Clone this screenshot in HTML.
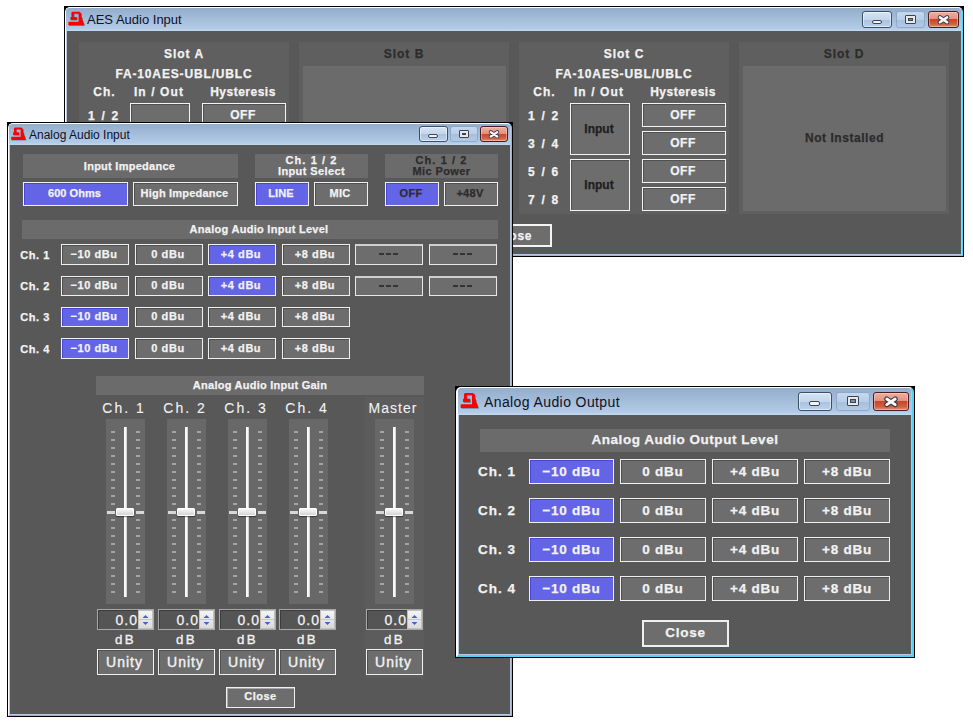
<!DOCTYPE html>
<html><head><meta charset="utf-8"><style>
html,body{margin:0;padding:0;width:973px;height:728px;overflow:hidden;background:#fff}
div{position:absolute;box-sizing:border-box}
.t{display:flex;align-items:center;justify-content:center;white-space:nowrap;text-align:center;-webkit-text-stroke:0.25px currentColor}
.tt{-webkit-text-stroke:0}
</style></head><body>
<div style="left:64px;top:6px;width:900px;height:251px;background:#000"></div>
<div style="left:65px;top:7px;width:898px;height:249px;background:#b8c6e0;border-left:1px solid #fff;border-top:1px solid #fff;border-right:1px solid #4cd2f2;border-bottom:1px solid #4cd2f2;border-radius:5px 5px 0 0"></div>
<div style="left:66px;top:8px;width:895px;height:23px;background:linear-gradient(#93adcb,#b3cbe6 90%,#c2daf4);border-radius:4px 4px 0 0"></div>
<div class="t" style="left:87px;top:9px;width:300px;height:20px;font:13px 'Liberation Sans';color:#101028;justify-content:flex-start;-webkit-text-stroke:0">AES Audio Input</div>
<svg style="position:absolute;left:66px;top:9px;overflow:visible" width="21.6" height="19.8" viewBox="0 0 24 22"><path d="M7,3 L15,3 L17,5 L17,8.8 L18,9.6 L18,12.2 L19,13.2 L19,14.6 L20,16 L20,18 L2.7,18 L2.7,14.2 L14,14.2 L14,5 L8.8,5 L8.8,8.8 L12.1,8.8 L12.1,12.1 L5,12.1 L5,8.8 L6,8.8 L6,4 Z" fill="rgba(40,60,70,0.45)" transform="translate(0.8,0.8)"/><path d="M7,3 L15,3 L17,5 L17,8.8 L18,9.6 L18,12.2 L19,13.2 L19,14.6 L20,16 L20,18 L2.7,18 L2.7,14.2 L14,14.2 L14,5 L8.8,5 L8.8,8.8 L12.1,8.8 L12.1,12.1 L5,12.1 L5,8.8 L6,8.8 L6,4 Z" fill="#ff0000"/></svg>
<div style="left:862px;top:11px;width:30px;height:17px;border:1px solid #3d4f66;border-radius:3px;background:linear-gradient(#d6e4f4 0%,#c3d6ee 50%,#a9c2e0 51%,#bcd2ec 100%);box-shadow:inset 0 0 0 1px rgba(255,255,255,.5)"></div>
<div style="left:872px;top:20px;width:10px;height:4px;background:#f4f4f4;border:1px solid #3c4450;border-radius:2px"></div>
<div style="left:896px;top:11px;width:29px;height:17px;border:1px solid #8fa9c8;border-radius:3px;background:linear-gradient(#c6d8ee 0%,#b8cde8 50%,#a6bfdd 51%,#b4cae6 100%)"></div>
<div style="left:905px;top:15px;width:11px;height:9px;border:1px solid #3c4450;background:#e8e8e8;border-radius:1px"></div>
<div style="left:908px;top:18px;width:5px;height:3px;border:1px solid #3c4450;background:#6d8fc0"></div>
<div style="left:928px;top:11px;width:31px;height:17px;border:1px solid #4a1c24;border-radius:3px;background:linear-gradient(#eeb0a0 0%,#e2907c 48%,#c8452a 50%,#d0603e 80%,#e09078 100%);box-shadow:inset 0 0 0 1px rgba(255,220,210,.45)"></div>
<svg style="position:absolute;left:928px;top:11px" width="31" height="17" viewBox="0 0 31 17"><g transform="translate(15.5,8.8) scale(1.0)"><path d="M-3.6,-2.4 L3.6,2.4 M3.6,-2.4 L-3.6,2.4" stroke="#3a3a48" stroke-width="4.4" stroke-linecap="round"/><path d="M-3.6,-2.4 L3.6,2.4 M3.6,-2.4 L-3.6,2.4" stroke="#fafafa" stroke-width="2.5" stroke-linecap="round"/></g></svg>
<div style="left:67px;top:31px;width:894px;height:223px;background:#585858"></div>
<div style="left:79px;top:42px;width:210px;height:172px;background:#5f5f5f"></div>
<div class="t" style="left:79px;top:47px;width:210px;height:14px;font:bold 12px 'Liberation Sans';letter-spacing:0.6px;color:#f2f2f2;letter-spacing:1px">Slot A</div>
<div class="t" style="left:79px;top:67px;width:210px;height:14px;font:bold 12px 'Liberation Sans';letter-spacing:0.6px;color:#f2f2f2;letter-spacing:0.85px">FA-10AES-UBL/UBLC</div>
<div class="t" style="left:87px;top:85px;width:35px;height:14px;font:bold 12px 'Liberation Sans';letter-spacing:0.6px;color:#f2f2f2;letter-spacing:1px">Ch.</div>
<div class="t" style="left:129px;top:85px;width:60px;height:14px;font:bold 12px 'Liberation Sans';letter-spacing:0.6px;color:#f2f2f2;letter-spacing:1.1px">In / Out</div>
<div class="t" style="left:201px;top:85px;width:84px;height:14px;font:bold 12px 'Liberation Sans';letter-spacing:0.6px;color:#f2f2f2;letter-spacing:0.5px">Hysteresis</div>
<div class="t" style="left:78px;top:109px;width:52px;height:14px;font:bold 12px 'Liberation Sans';letter-spacing:0.6px;color:#f2f2f2;letter-spacing:1.7px">1 / 2</div>
<div style="left:202px;top:103px;width:84px;height:24px;background:#6d6d6d;border:1px solid #f4f4f4;box-shadow:inset 1px 1px 0 #505050"></div>
<div class="t" style="left:201px;top:103px;width:84px;height:24px;font:bold 12px 'Liberation Sans';letter-spacing:0.6px;color:#f2f2f2;letter-spacing:0.5px">OFF</div>
<div class="t" style="left:78px;top:137px;width:52px;height:14px;font:bold 12px 'Liberation Sans';letter-spacing:0.6px;color:#f2f2f2;letter-spacing:1.7px">3 / 4</div>
<div style="left:202px;top:131px;width:84px;height:24px;background:#6d6d6d;border:1px solid #f4f4f4;box-shadow:inset 1px 1px 0 #505050"></div>
<div class="t" style="left:201px;top:131px;width:84px;height:24px;font:bold 12px 'Liberation Sans';letter-spacing:0.6px;color:#f2f2f2;letter-spacing:0.5px">OFF</div>
<div class="t" style="left:78px;top:165px;width:52px;height:14px;font:bold 12px 'Liberation Sans';letter-spacing:0.6px;color:#f2f2f2;letter-spacing:1.7px">5 / 6</div>
<div style="left:202px;top:159px;width:84px;height:24px;background:#6d6d6d;border:1px solid #f4f4f4;box-shadow:inset 1px 1px 0 #505050"></div>
<div class="t" style="left:201px;top:159px;width:84px;height:24px;font:bold 12px 'Liberation Sans';letter-spacing:0.6px;color:#f2f2f2;letter-spacing:0.5px">OFF</div>
<div class="t" style="left:78px;top:193px;width:52px;height:14px;font:bold 12px 'Liberation Sans';letter-spacing:0.6px;color:#f2f2f2;letter-spacing:1.7px">7 / 8</div>
<div style="left:202px;top:187px;width:84px;height:24px;background:#6d6d6d;border:1px solid #f4f4f4;box-shadow:inset 1px 1px 0 #505050"></div>
<div class="t" style="left:201px;top:187px;width:84px;height:24px;font:bold 12px 'Liberation Sans';letter-spacing:0.6px;color:#f2f2f2;letter-spacing:0.5px">OFF</div>
<div style="left:130px;top:103px;width:60px;height:52px;background:#6d6d6d;border:1px solid #f4f4f4;box-shadow:inset 1px 1px 0 #505050"></div>
<div class="t" style="left:129px;top:103px;width:60px;height:51px;font:bold 12px 'Liberation Sans';letter-spacing:0.6px;color:#1e1e1e;letter-spacing:0px">Input</div>
<div style="left:130px;top:159px;width:60px;height:52px;background:#6d6d6d;border:1px solid #f4f4f4;box-shadow:inset 1px 1px 0 #505050"></div>
<div class="t" style="left:129px;top:159px;width:60px;height:51px;font:bold 12px 'Liberation Sans';letter-spacing:0.6px;color:#1e1e1e;letter-spacing:0px">Input</div>
<div style="left:299px;top:42px;width:210px;height:172px;background:#5f5f5f"></div>
<div class="t" style="left:299px;top:47px;width:210px;height:14px;font:bold 12px 'Liberation Sans';letter-spacing:0.6px;color:#2c2c2c;letter-spacing:1px">Slot B</div>
<div style="left:303px;top:66px;width:203px;height:145px;background:#6b6b6b"></div>
<div style="left:519px;top:42px;width:210px;height:172px;background:#5f5f5f"></div>
<div class="t" style="left:519px;top:47px;width:210px;height:14px;font:bold 12px 'Liberation Sans';letter-spacing:0.6px;color:#f2f2f2;letter-spacing:1px">Slot C</div>
<div class="t" style="left:519px;top:67px;width:210px;height:14px;font:bold 12px 'Liberation Sans';letter-spacing:0.6px;color:#f2f2f2;letter-spacing:0.85px">FA-10AES-UBL/UBLC</div>
<div class="t" style="left:527px;top:85px;width:35px;height:14px;font:bold 12px 'Liberation Sans';letter-spacing:0.6px;color:#f2f2f2;letter-spacing:1px">Ch.</div>
<div class="t" style="left:569px;top:85px;width:60px;height:14px;font:bold 12px 'Liberation Sans';letter-spacing:0.6px;color:#f2f2f2;letter-spacing:1.1px">In / Out</div>
<div class="t" style="left:641px;top:85px;width:84px;height:14px;font:bold 12px 'Liberation Sans';letter-spacing:0.6px;color:#f2f2f2;letter-spacing:0.5px">Hysteresis</div>
<div class="t" style="left:518px;top:109px;width:52px;height:14px;font:bold 12px 'Liberation Sans';letter-spacing:0.6px;color:#f2f2f2;letter-spacing:1.7px">1 / 2</div>
<div style="left:642px;top:103px;width:84px;height:24px;background:#6d6d6d;border:1px solid #f4f4f4;box-shadow:inset 1px 1px 0 #505050"></div>
<div class="t" style="left:641px;top:103px;width:84px;height:24px;font:bold 12px 'Liberation Sans';letter-spacing:0.6px;color:#f2f2f2;letter-spacing:0.5px">OFF</div>
<div class="t" style="left:518px;top:137px;width:52px;height:14px;font:bold 12px 'Liberation Sans';letter-spacing:0.6px;color:#f2f2f2;letter-spacing:1.7px">3 / 4</div>
<div style="left:642px;top:131px;width:84px;height:24px;background:#6d6d6d;border:1px solid #f4f4f4;box-shadow:inset 1px 1px 0 #505050"></div>
<div class="t" style="left:641px;top:131px;width:84px;height:24px;font:bold 12px 'Liberation Sans';letter-spacing:0.6px;color:#f2f2f2;letter-spacing:0.5px">OFF</div>
<div class="t" style="left:518px;top:165px;width:52px;height:14px;font:bold 12px 'Liberation Sans';letter-spacing:0.6px;color:#f2f2f2;letter-spacing:1.7px">5 / 6</div>
<div style="left:642px;top:159px;width:84px;height:24px;background:#6d6d6d;border:1px solid #f4f4f4;box-shadow:inset 1px 1px 0 #505050"></div>
<div class="t" style="left:641px;top:159px;width:84px;height:24px;font:bold 12px 'Liberation Sans';letter-spacing:0.6px;color:#f2f2f2;letter-spacing:0.5px">OFF</div>
<div class="t" style="left:518px;top:193px;width:52px;height:14px;font:bold 12px 'Liberation Sans';letter-spacing:0.6px;color:#f2f2f2;letter-spacing:1.7px">7 / 8</div>
<div style="left:642px;top:187px;width:84px;height:24px;background:#6d6d6d;border:1px solid #f4f4f4;box-shadow:inset 1px 1px 0 #505050"></div>
<div class="t" style="left:641px;top:187px;width:84px;height:24px;font:bold 12px 'Liberation Sans';letter-spacing:0.6px;color:#f2f2f2;letter-spacing:0.5px">OFF</div>
<div style="left:570px;top:103px;width:60px;height:52px;background:#6d6d6d;border:1px solid #f4f4f4;box-shadow:inset 1px 1px 0 #505050"></div>
<div class="t" style="left:569px;top:103px;width:60px;height:51px;font:bold 12px 'Liberation Sans';letter-spacing:0.6px;color:#1e1e1e;letter-spacing:0px">Input</div>
<div style="left:570px;top:159px;width:60px;height:52px;background:#6d6d6d;border:1px solid #f4f4f4;box-shadow:inset 1px 1px 0 #505050"></div>
<div class="t" style="left:569px;top:159px;width:60px;height:51px;font:bold 12px 'Liberation Sans';letter-spacing:0.6px;color:#1e1e1e;letter-spacing:0px">Input</div>
<div style="left:739px;top:42px;width:210px;height:172px;background:#5f5f5f"></div>
<div class="t" style="left:739px;top:47px;width:210px;height:14px;font:bold 12px 'Liberation Sans';letter-spacing:0.6px;color:#2c2c2c;letter-spacing:1px">Slot D</div>
<div style="left:743px;top:66px;width:203px;height:145px;background:#6b6b6b"></div>
<div class="t" style="left:743px;top:65px;width:203px;height:145px;font:bold 12px 'Liberation Sans';letter-spacing:0.6px;color:#2c2c2c;letter-spacing:0.55px">Not Installed</div>
<div style="left:476px;top:224px;width:76px;height:23px;background:#6d6d6d;border:2px solid #f4f4f4"></div>
<div class="t" style="left:476px;top:224px;width:76px;height:23px;font:bold 12px 'Liberation Sans';letter-spacing:0.6px;color:#f2f2f2;letter-spacing:0.8px">Close</div>
<div style="left:7px;top:122px;width:506px;height:595px;background:#000"></div>
<div style="left:8px;top:123px;width:504px;height:593px;background:#b8c6e0;border-left:1px solid #fff;border-top:1px solid #fff;border-right:1px solid #4cd2f2;border-bottom:1px solid #4cd2f2;border-radius:5px 5px 0 0"></div>
<div style="left:9px;top:124px;width:501px;height:21px;background:linear-gradient(#93adcb,#b3cbe6 90%,#c2daf4);border-radius:4px 4px 0 0"></div>
<div class="t" style="left:29px;top:125px;width:300px;height:20px;font:12px 'Liberation Sans';color:#101028;justify-content:flex-start;-webkit-text-stroke:0">Analog Audio Input</div>
<svg style="position:absolute;left:9.3px;top:124.9px;overflow:visible" width="19.919999999999998" height="18.259999999999998" viewBox="0 0 24 22"><path d="M7,3 L15,3 L17,5 L17,8.8 L18,9.6 L18,12.2 L19,13.2 L19,14.6 L20,16 L20,18 L2.7,18 L2.7,14.2 L14,14.2 L14,5 L8.8,5 L8.8,8.8 L12.1,8.8 L12.1,12.1 L5,12.1 L5,8.8 L6,8.8 L6,4 Z" fill="rgba(40,60,70,0.45)" transform="translate(0.8,0.8)"/><path d="M7,3 L15,3 L17,5 L17,8.8 L18,9.6 L18,12.2 L19,13.2 L19,14.6 L20,16 L20,18 L2.7,18 L2.7,14.2 L14,14.2 L14,5 L8.8,5 L8.8,8.8 L12.1,8.8 L12.1,12.1 L5,12.1 L5,8.8 L6,8.8 L6,4 Z" fill="#ff0000"/></svg>
<div style="left:419px;top:126px;width:29px;height:16px;border:1px solid #3d4f66;border-radius:3px;background:linear-gradient(#d6e4f4 0%,#c3d6ee 50%,#a9c2e0 51%,#bcd2ec 100%);box-shadow:inset 0 0 0 1px rgba(255,255,255,.5)"></div>
<div style="left:428px;top:134px;width:10px;height:4px;background:#f4f4f4;border:1px solid #3c4450;border-radius:2px"></div>
<div style="left:450px;top:126px;width:28px;height:16px;border:1px solid #8fa9c8;border-radius:3px;background:linear-gradient(#c6d8ee 0%,#b8cde8 50%,#a6bfdd 51%,#b4cae6 100%)"></div>
<div style="left:459px;top:130px;width:10px;height:8px;border:1px solid #3c4450;background:#e8e8e8;border-radius:1px"></div>
<div style="left:462px;top:133px;width:4px;height:2px;border:1px solid #3c4450;background:#6d8fc0"></div>
<div style="left:480px;top:126px;width:28px;height:16px;border:1px solid #4a1c24;border-radius:3px;background:linear-gradient(#eeb0a0 0%,#e2907c 48%,#c8452a 50%,#d0603e 80%,#e09078 100%);box-shadow:inset 0 0 0 1px rgba(255,220,210,.45)"></div>
<svg style="position:absolute;left:480px;top:126px" width="28" height="16" viewBox="0 0 28 16"><g transform="translate(14.0,8.3) scale(0.9032258064516129)"><path d="M-3.6,-2.4 L3.6,2.4 M3.6,-2.4 L-3.6,2.4" stroke="#3a3a48" stroke-width="4.4" stroke-linecap="round"/><path d="M-3.6,-2.4 L3.6,2.4 M3.6,-2.4 L-3.6,2.4" stroke="#fafafa" stroke-width="2.5" stroke-linecap="round"/></g></svg>
<div style="left:10px;top:145px;width:500px;height:569px;background:#585858"></div>
<div style="left:23px;top:154px;width:215px;height:24px;background:#6b6b6b"></div>
<div class="t" style="left:22px;top:154px;width:215px;height:24px;font:bold 11px 'Liberation Sans';color:#f2f2f2;letter-spacing:0.26px">Input Impedance</div>
<div style="left:23px;top:182px;width:105px;height:24px;background:#6464e6;border:1px solid #f0f0f0;box-shadow:inset 1px 1px 0 #4646d8"></div>
<div class="t" style="left:22px;top:181px;width:105px;height:24px;font:bold 11px 'Liberation Sans';color:#f2f2f2;letter-spacing:0.05px">600 Ohms</div>
<div style="left:133px;top:182px;width:105px;height:24px;background:#6d6d6d;border:1px solid #f0f0f0;box-shadow:inset 1px 1px 0 #505050"></div>
<div class="t" style="left:132px;top:181px;width:105px;height:24px;font:bold 11px 'Liberation Sans';color:#f2f2f2;letter-spacing:0.2px">High Impedance</div>
<div style="left:255px;top:154px;width:113px;height:24px;background:#6b6b6b"></div>
<div class="t" style="left:255px;top:154px;width:113px;height:24px;font:bold 11px 'Liberation Sans';color:#f2f2f2;line-height:11px;flex-direction:column;letter-spacing:0.4px"><span style="letter-spacing:1.1px">Ch. 1 / 2</span><span>Input Select</span></div>
<div style="left:255px;top:182px;width:54px;height:24px;background:#6464e6;border:1px solid #f0f0f0;box-shadow:inset 1px 1px 0 #4646d8"></div>
<div class="t" style="left:254px;top:181px;width:54px;height:24px;font:bold 11px 'Liberation Sans';color:#f2f2f2;letter-spacing:0.1px">LINE</div>
<div style="left:314px;top:182px;width:54px;height:24px;background:#6d6d6d;border:1px solid #f0f0f0;box-shadow:inset 1px 1px 0 #505050"></div>
<div class="t" style="left:313px;top:181px;width:54px;height:24px;font:bold 11px 'Liberation Sans';color:#f2f2f2;letter-spacing:0.3px">MIC</div>
<div style="left:385px;top:154px;width:113px;height:24px;background:#6b6b6b"></div>
<div class="t" style="left:385px;top:154px;width:113px;height:24px;font:bold 11px 'Liberation Sans';color:#2c2c2c;line-height:11px;flex-direction:column;letter-spacing:0.4px"><span style="letter-spacing:1.1px">Ch. 1 / 2</span><span>Mic Power</span></div>
<div style="left:385px;top:182px;width:54px;height:24px;background:#6464e6;border:1px solid #f0f0f0;box-shadow:inset 1px 1px 0 #4646d8"></div>
<div class="t" style="left:384px;top:181px;width:54px;height:24px;font:bold 11px 'Liberation Sans';color:#2c2c2c;letter-spacing:0.3px">OFF</div>
<div style="left:444px;top:182px;width:54px;height:24px;background:#6d6d6d;border:1px solid #f0f0f0;box-shadow:inset 1px 1px 0 #505050"></div>
<div class="t" style="left:443px;top:181px;width:54px;height:24px;font:bold 11px 'Liberation Sans';color:#2c2c2c;letter-spacing:0.3px">+48V</div>
<div style="left:22px;top:220px;width:476px;height:19px;background:#6b6b6b"></div>
<div class="t" style="left:21px;top:219.5px;width:476px;height:19px;font:bold 11px 'Liberation Sans';color:#f2f2f2;letter-spacing:0.28px">Analog Audio Input Level</div>
<div class="t" style="left:15px;top:244px;width:40px;height:21px;font:bold 11px 'Liberation Sans';color:#f2f2f2;letter-spacing:0.55px">Ch. 1</div>
<div style="left:61px;top:244px;width:68px;height:21px;background:#6d6d6d;border:1px solid #f0f0f0;box-shadow:inset 1px 1px 0 #505050"></div>
<div class="t" style="left:60px;top:243px;width:68px;height:21px;font:bold 11px 'Liberation Sans';color:#f2f2f2;letter-spacing:0.55px">−10 dBu</div>
<div style="left:135px;top:244px;width:68px;height:21px;background:#6d6d6d;border:1px solid #f0f0f0;box-shadow:inset 1px 1px 0 #505050"></div>
<div class="t" style="left:134px;top:243px;width:68px;height:21px;font:bold 11px 'Liberation Sans';color:#f2f2f2;letter-spacing:0.55px">0 dBu</div>
<div style="left:208px;top:244px;width:68px;height:21px;background:#6464e6;border:1px solid #f0f0f0;box-shadow:inset 1px 1px 0 #4646d8"></div>
<div class="t" style="left:207px;top:243px;width:68px;height:21px;font:bold 11px 'Liberation Sans';color:#f2f2f2;letter-spacing:0.55px">+4 dBu</div>
<div style="left:282px;top:244px;width:68px;height:21px;background:#6d6d6d;border:1px solid #f0f0f0;box-shadow:inset 1px 1px 0 #505050"></div>
<div class="t" style="left:281px;top:243px;width:68px;height:21px;font:bold 11px 'Liberation Sans';color:#f2f2f2;letter-spacing:0.55px">+8 dBu</div>
<div style="left:355px;top:244px;width:68px;height:21px;background:#6d6d6d;border:1px solid #e8e8e8;border-top:2px solid #cfcfcf"></div>
<div style="left:379px;top:253px;width:5px;height:2px;background:#333"></div>
<div style="left:386px;top:253px;width:5px;height:2px;background:#333"></div>
<div style="left:393px;top:253px;width:5px;height:2px;background:#333"></div>
<div style="left:429px;top:244px;width:68px;height:21px;background:#6d6d6d;border:1px solid #e8e8e8;border-top:2px solid #cfcfcf"></div>
<div style="left:453px;top:253px;width:5px;height:2px;background:#333"></div>
<div style="left:460px;top:253px;width:5px;height:2px;background:#333"></div>
<div style="left:467px;top:253px;width:5px;height:2px;background:#333"></div>
<div class="t" style="left:15px;top:276px;width:40px;height:20px;font:bold 11px 'Liberation Sans';color:#f2f2f2;letter-spacing:0.55px">Ch. 2</div>
<div style="left:61px;top:276px;width:68px;height:20px;background:#6d6d6d;border:1px solid #f0f0f0;box-shadow:inset 1px 1px 0 #505050"></div>
<div class="t" style="left:60px;top:275px;width:68px;height:20px;font:bold 11px 'Liberation Sans';color:#f2f2f2;letter-spacing:0.55px">−10 dBu</div>
<div style="left:135px;top:276px;width:68px;height:20px;background:#6d6d6d;border:1px solid #f0f0f0;box-shadow:inset 1px 1px 0 #505050"></div>
<div class="t" style="left:134px;top:275px;width:68px;height:20px;font:bold 11px 'Liberation Sans';color:#f2f2f2;letter-spacing:0.55px">0 dBu</div>
<div style="left:208px;top:276px;width:68px;height:20px;background:#6464e6;border:1px solid #f0f0f0;box-shadow:inset 1px 1px 0 #4646d8"></div>
<div class="t" style="left:207px;top:275px;width:68px;height:20px;font:bold 11px 'Liberation Sans';color:#f2f2f2;letter-spacing:0.55px">+4 dBu</div>
<div style="left:282px;top:276px;width:68px;height:20px;background:#6d6d6d;border:1px solid #f0f0f0;box-shadow:inset 1px 1px 0 #505050"></div>
<div class="t" style="left:281px;top:275px;width:68px;height:20px;font:bold 11px 'Liberation Sans';color:#f2f2f2;letter-spacing:0.55px">+8 dBu</div>
<div style="left:355px;top:276px;width:68px;height:20px;background:#6d6d6d;border:1px solid #e8e8e8;border-top:2px solid #cfcfcf"></div>
<div style="left:379px;top:285px;width:5px;height:2px;background:#333"></div>
<div style="left:386px;top:285px;width:5px;height:2px;background:#333"></div>
<div style="left:393px;top:285px;width:5px;height:2px;background:#333"></div>
<div style="left:429px;top:276px;width:68px;height:20px;background:#6d6d6d;border:1px solid #e8e8e8;border-top:2px solid #cfcfcf"></div>
<div style="left:453px;top:285px;width:5px;height:2px;background:#333"></div>
<div style="left:460px;top:285px;width:5px;height:2px;background:#333"></div>
<div style="left:467px;top:285px;width:5px;height:2px;background:#333"></div>
<div class="t" style="left:15px;top:307px;width:40px;height:20px;font:bold 11px 'Liberation Sans';color:#f2f2f2;letter-spacing:0.55px">Ch. 3</div>
<div style="left:61px;top:307px;width:68px;height:20px;background:#6464e6;border:1px solid #f0f0f0;box-shadow:inset 1px 1px 0 #4646d8"></div>
<div class="t" style="left:60px;top:306px;width:68px;height:20px;font:bold 11px 'Liberation Sans';color:#f2f2f2;letter-spacing:0.55px">−10 dBu</div>
<div style="left:135px;top:307px;width:68px;height:20px;background:#6d6d6d;border:1px solid #f0f0f0;box-shadow:inset 1px 1px 0 #505050"></div>
<div class="t" style="left:134px;top:306px;width:68px;height:20px;font:bold 11px 'Liberation Sans';color:#f2f2f2;letter-spacing:0.55px">0 dBu</div>
<div style="left:208px;top:307px;width:68px;height:20px;background:#6d6d6d;border:1px solid #f0f0f0;box-shadow:inset 1px 1px 0 #505050"></div>
<div class="t" style="left:207px;top:306px;width:68px;height:20px;font:bold 11px 'Liberation Sans';color:#f2f2f2;letter-spacing:0.55px">+4 dBu</div>
<div style="left:282px;top:307px;width:68px;height:20px;background:#6d6d6d;border:1px solid #f0f0f0;box-shadow:inset 1px 1px 0 #505050"></div>
<div class="t" style="left:281px;top:306px;width:68px;height:20px;font:bold 11px 'Liberation Sans';color:#f2f2f2;letter-spacing:0.55px">+8 dBu</div>
<div class="t" style="left:15px;top:338px;width:40px;height:21px;font:bold 11px 'Liberation Sans';color:#f2f2f2;letter-spacing:0.55px">Ch. 4</div>
<div style="left:61px;top:338px;width:68px;height:21px;background:#6464e6;border:1px solid #f0f0f0;box-shadow:inset 1px 1px 0 #4646d8"></div>
<div class="t" style="left:60px;top:337px;width:68px;height:21px;font:bold 11px 'Liberation Sans';color:#f2f2f2;letter-spacing:0.55px">−10 dBu</div>
<div style="left:135px;top:338px;width:68px;height:21px;background:#6d6d6d;border:1px solid #f0f0f0;box-shadow:inset 1px 1px 0 #505050"></div>
<div class="t" style="left:134px;top:337px;width:68px;height:21px;font:bold 11px 'Liberation Sans';color:#f2f2f2;letter-spacing:0.55px">0 dBu</div>
<div style="left:208px;top:338px;width:68px;height:21px;background:#6d6d6d;border:1px solid #f0f0f0;box-shadow:inset 1px 1px 0 #505050"></div>
<div class="t" style="left:207px;top:337px;width:68px;height:21px;font:bold 11px 'Liberation Sans';color:#f2f2f2;letter-spacing:0.55px">+4 dBu</div>
<div style="left:282px;top:338px;width:68px;height:21px;background:#6d6d6d;border:1px solid #f0f0f0;box-shadow:inset 1px 1px 0 #505050"></div>
<div class="t" style="left:281px;top:337px;width:68px;height:21px;font:bold 11px 'Liberation Sans';color:#f2f2f2;letter-spacing:0.55px">+8 dBu</div>
<div style="left:96px;top:376px;width:328px;height:19px;background:#6b6b6b"></div>
<div class="t" style="left:96px;top:375px;width:328px;height:19px;font:bold 11px 'Liberation Sans';color:#f2f2f2;letter-spacing:0.25px">Analog Audio Input Gain</div>
<div style="left:365px;top:397px;width:59px;height:281px;background:#5c5c5c"></div>
<div class="t" style="left:94.5px;top:401px;width:59px;height:14px;font:14px 'Liberation Sans';color:#f2f2f2;letter-spacing:2px;-webkit-text-stroke:0.1px">Ch. 1</div>
<div style="left:106px;top:419px;width:39px;height:185px;background:#686868"></div>
<div style="left:111px;top:431px;width:4px;height:2px;background:#a4a4a4"></div>
<div style="left:136px;top:431px;width:4px;height:2px;background:#a4a4a4"></div>
<div style="left:111px;top:439px;width:4px;height:2px;background:#a4a4a4"></div>
<div style="left:136px;top:439px;width:4px;height:2px;background:#a4a4a4"></div>
<div style="left:111px;top:447px;width:4px;height:2px;background:#a4a4a4"></div>
<div style="left:136px;top:447px;width:4px;height:2px;background:#a4a4a4"></div>
<div style="left:111px;top:455px;width:4px;height:2px;background:#a4a4a4"></div>
<div style="left:136px;top:455px;width:4px;height:2px;background:#a4a4a4"></div>
<div style="left:111px;top:463px;width:4px;height:2px;background:#a4a4a4"></div>
<div style="left:136px;top:463px;width:4px;height:2px;background:#a4a4a4"></div>
<div style="left:111px;top:471px;width:4px;height:2px;background:#a4a4a4"></div>
<div style="left:136px;top:471px;width:4px;height:2px;background:#a4a4a4"></div>
<div style="left:111px;top:479px;width:4px;height:2px;background:#a4a4a4"></div>
<div style="left:136px;top:479px;width:4px;height:2px;background:#a4a4a4"></div>
<div style="left:111px;top:487px;width:4px;height:2px;background:#a4a4a4"></div>
<div style="left:136px;top:487px;width:4px;height:2px;background:#a4a4a4"></div>
<div style="left:111px;top:495px;width:4px;height:2px;background:#a4a4a4"></div>
<div style="left:136px;top:495px;width:4px;height:2px;background:#a4a4a4"></div>
<div style="left:111px;top:503px;width:4px;height:2px;background:#a4a4a4"></div>
<div style="left:136px;top:503px;width:4px;height:2px;background:#a4a4a4"></div>
<div style="left:107px;top:511px;width:8px;height:3px;background:#d8d8d8"></div>
<div style="left:136px;top:511px;width:8px;height:3px;background:#d8d8d8"></div>
<div style="left:111px;top:519px;width:4px;height:2px;background:#a4a4a4"></div>
<div style="left:136px;top:519px;width:4px;height:2px;background:#a4a4a4"></div>
<div style="left:111px;top:527px;width:4px;height:2px;background:#a4a4a4"></div>
<div style="left:136px;top:527px;width:4px;height:2px;background:#a4a4a4"></div>
<div style="left:111px;top:535px;width:4px;height:2px;background:#a4a4a4"></div>
<div style="left:136px;top:535px;width:4px;height:2px;background:#a4a4a4"></div>
<div style="left:111px;top:543px;width:4px;height:2px;background:#a4a4a4"></div>
<div style="left:136px;top:543px;width:4px;height:2px;background:#a4a4a4"></div>
<div style="left:111px;top:551px;width:4px;height:2px;background:#a4a4a4"></div>
<div style="left:136px;top:551px;width:4px;height:2px;background:#a4a4a4"></div>
<div style="left:111px;top:559px;width:4px;height:2px;background:#a4a4a4"></div>
<div style="left:136px;top:559px;width:4px;height:2px;background:#a4a4a4"></div>
<div style="left:111px;top:567px;width:4px;height:2px;background:#a4a4a4"></div>
<div style="left:136px;top:567px;width:4px;height:2px;background:#a4a4a4"></div>
<div style="left:111px;top:575px;width:4px;height:2px;background:#a4a4a4"></div>
<div style="left:136px;top:575px;width:4px;height:2px;background:#a4a4a4"></div>
<div style="left:111px;top:583px;width:4px;height:2px;background:#a4a4a4"></div>
<div style="left:136px;top:583px;width:4px;height:2px;background:#a4a4a4"></div>
<div style="left:111px;top:591px;width:4px;height:2px;background:#a4a4a4"></div>
<div style="left:136px;top:591px;width:4px;height:2px;background:#a4a4a4"></div>
<div style="left:124px;top:427px;width:3px;height:170px;background:linear-gradient(90deg,#ffffff 0%,#f4f4f4 60%,#c0c0c0 100%)"></div>
<div style="left:116px;top:508px;width:18px;height:8px;background:linear-gradient(#f8f8f8,#d4d4d4);border:1px solid #fff;border-radius:1px;box-shadow:0 1px 1px rgba(0,0,0,.5)"></div>
<div style="left:97px;top:609px;width:57px;height:21px;background:#555555;border:1px solid #a8a8a8;box-shadow:inset 1px 1px 0 #3c3c3c"></div>
<div class="t" style="left:97px;top:609px;width:41px;height:21px;font:14px 'Liberation Sans';color:#f2f2f2;justify-content:flex-end;letter-spacing:1px">0.0</div>
<div style="left:138px;top:610px;width:15px;height:19px;background:linear-gradient(#f4f4f4,#dadada);border:1px solid #c0c0c0"></div>
<svg style="position:absolute;left:138px;top:610px" width="15" height="19"><path d="M4.5,8 L7.5,5 L10.5,8 Z" fill="#4864c0"/><path d="M4.5,12 L7.5,15 L10.5,12 Z" fill="#4864c0"/><line x1="1" y1="9.5" x2="14" y2="9.5" stroke="#c8c8c8"/></svg>
<div class="t" style="left:97px;top:632.6px;width:57px;height:14px;font:13.3px 'Liberation Sans';letter-spacing:2.3px;-webkit-text-stroke:0.35px;color:#f2f2f2">dB</div>
<div style="left:97px;top:649px;width:57px;height:26px;background:#6d6d6d;border:1px solid #f0f0f0;box-shadow:inset 1px 1px 0 #505050"></div>
<div class="t" style="left:96px;top:649px;width:57px;height:26px;font:14px 'Liberation Sans';-webkit-text-stroke:0.4px;color:#f2f2f2;letter-spacing:1px">Unity</div>
<div class="t" style="left:155.5px;top:401px;width:59px;height:14px;font:14px 'Liberation Sans';color:#f2f2f2;letter-spacing:2px;-webkit-text-stroke:0.1px">Ch. 2</div>
<div style="left:167px;top:419px;width:39px;height:185px;background:#686868"></div>
<div style="left:172px;top:431px;width:4px;height:2px;background:#a4a4a4"></div>
<div style="left:197px;top:431px;width:4px;height:2px;background:#a4a4a4"></div>
<div style="left:172px;top:439px;width:4px;height:2px;background:#a4a4a4"></div>
<div style="left:197px;top:439px;width:4px;height:2px;background:#a4a4a4"></div>
<div style="left:172px;top:447px;width:4px;height:2px;background:#a4a4a4"></div>
<div style="left:197px;top:447px;width:4px;height:2px;background:#a4a4a4"></div>
<div style="left:172px;top:455px;width:4px;height:2px;background:#a4a4a4"></div>
<div style="left:197px;top:455px;width:4px;height:2px;background:#a4a4a4"></div>
<div style="left:172px;top:463px;width:4px;height:2px;background:#a4a4a4"></div>
<div style="left:197px;top:463px;width:4px;height:2px;background:#a4a4a4"></div>
<div style="left:172px;top:471px;width:4px;height:2px;background:#a4a4a4"></div>
<div style="left:197px;top:471px;width:4px;height:2px;background:#a4a4a4"></div>
<div style="left:172px;top:479px;width:4px;height:2px;background:#a4a4a4"></div>
<div style="left:197px;top:479px;width:4px;height:2px;background:#a4a4a4"></div>
<div style="left:172px;top:487px;width:4px;height:2px;background:#a4a4a4"></div>
<div style="left:197px;top:487px;width:4px;height:2px;background:#a4a4a4"></div>
<div style="left:172px;top:495px;width:4px;height:2px;background:#a4a4a4"></div>
<div style="left:197px;top:495px;width:4px;height:2px;background:#a4a4a4"></div>
<div style="left:172px;top:503px;width:4px;height:2px;background:#a4a4a4"></div>
<div style="left:197px;top:503px;width:4px;height:2px;background:#a4a4a4"></div>
<div style="left:168px;top:511px;width:8px;height:3px;background:#d8d8d8"></div>
<div style="left:197px;top:511px;width:8px;height:3px;background:#d8d8d8"></div>
<div style="left:172px;top:519px;width:4px;height:2px;background:#a4a4a4"></div>
<div style="left:197px;top:519px;width:4px;height:2px;background:#a4a4a4"></div>
<div style="left:172px;top:527px;width:4px;height:2px;background:#a4a4a4"></div>
<div style="left:197px;top:527px;width:4px;height:2px;background:#a4a4a4"></div>
<div style="left:172px;top:535px;width:4px;height:2px;background:#a4a4a4"></div>
<div style="left:197px;top:535px;width:4px;height:2px;background:#a4a4a4"></div>
<div style="left:172px;top:543px;width:4px;height:2px;background:#a4a4a4"></div>
<div style="left:197px;top:543px;width:4px;height:2px;background:#a4a4a4"></div>
<div style="left:172px;top:551px;width:4px;height:2px;background:#a4a4a4"></div>
<div style="left:197px;top:551px;width:4px;height:2px;background:#a4a4a4"></div>
<div style="left:172px;top:559px;width:4px;height:2px;background:#a4a4a4"></div>
<div style="left:197px;top:559px;width:4px;height:2px;background:#a4a4a4"></div>
<div style="left:172px;top:567px;width:4px;height:2px;background:#a4a4a4"></div>
<div style="left:197px;top:567px;width:4px;height:2px;background:#a4a4a4"></div>
<div style="left:172px;top:575px;width:4px;height:2px;background:#a4a4a4"></div>
<div style="left:197px;top:575px;width:4px;height:2px;background:#a4a4a4"></div>
<div style="left:172px;top:583px;width:4px;height:2px;background:#a4a4a4"></div>
<div style="left:197px;top:583px;width:4px;height:2px;background:#a4a4a4"></div>
<div style="left:172px;top:591px;width:4px;height:2px;background:#a4a4a4"></div>
<div style="left:197px;top:591px;width:4px;height:2px;background:#a4a4a4"></div>
<div style="left:185px;top:427px;width:3px;height:170px;background:linear-gradient(90deg,#ffffff 0%,#f4f4f4 60%,#c0c0c0 100%)"></div>
<div style="left:177px;top:508px;width:18px;height:8px;background:linear-gradient(#f8f8f8,#d4d4d4);border:1px solid #fff;border-radius:1px;box-shadow:0 1px 1px rgba(0,0,0,.5)"></div>
<div style="left:158px;top:609px;width:57px;height:21px;background:#555555;border:1px solid #a8a8a8;box-shadow:inset 1px 1px 0 #3c3c3c"></div>
<div class="t" style="left:158px;top:609px;width:41px;height:21px;font:14px 'Liberation Sans';color:#f2f2f2;justify-content:flex-end;letter-spacing:1px">0.0</div>
<div style="left:199px;top:610px;width:15px;height:19px;background:linear-gradient(#f4f4f4,#dadada);border:1px solid #c0c0c0"></div>
<svg style="position:absolute;left:199px;top:610px" width="15" height="19"><path d="M4.5,8 L7.5,5 L10.5,8 Z" fill="#4864c0"/><path d="M4.5,12 L7.5,15 L10.5,12 Z" fill="#4864c0"/><line x1="1" y1="9.5" x2="14" y2="9.5" stroke="#c8c8c8"/></svg>
<div class="t" style="left:158px;top:632.6px;width:57px;height:14px;font:13.3px 'Liberation Sans';letter-spacing:2.3px;-webkit-text-stroke:0.35px;color:#f2f2f2">dB</div>
<div style="left:158px;top:649px;width:57px;height:26px;background:#6d6d6d;border:1px solid #f0f0f0;box-shadow:inset 1px 1px 0 #505050"></div>
<div class="t" style="left:157px;top:649px;width:57px;height:26px;font:14px 'Liberation Sans';-webkit-text-stroke:0.4px;color:#f2f2f2;letter-spacing:1px">Unity</div>
<div class="t" style="left:216.5px;top:401px;width:59px;height:14px;font:14px 'Liberation Sans';color:#f2f2f2;letter-spacing:2px;-webkit-text-stroke:0.1px">Ch. 3</div>
<div style="left:228px;top:419px;width:39px;height:185px;background:#686868"></div>
<div style="left:233px;top:431px;width:4px;height:2px;background:#a4a4a4"></div>
<div style="left:258px;top:431px;width:4px;height:2px;background:#a4a4a4"></div>
<div style="left:233px;top:439px;width:4px;height:2px;background:#a4a4a4"></div>
<div style="left:258px;top:439px;width:4px;height:2px;background:#a4a4a4"></div>
<div style="left:233px;top:447px;width:4px;height:2px;background:#a4a4a4"></div>
<div style="left:258px;top:447px;width:4px;height:2px;background:#a4a4a4"></div>
<div style="left:233px;top:455px;width:4px;height:2px;background:#a4a4a4"></div>
<div style="left:258px;top:455px;width:4px;height:2px;background:#a4a4a4"></div>
<div style="left:233px;top:463px;width:4px;height:2px;background:#a4a4a4"></div>
<div style="left:258px;top:463px;width:4px;height:2px;background:#a4a4a4"></div>
<div style="left:233px;top:471px;width:4px;height:2px;background:#a4a4a4"></div>
<div style="left:258px;top:471px;width:4px;height:2px;background:#a4a4a4"></div>
<div style="left:233px;top:479px;width:4px;height:2px;background:#a4a4a4"></div>
<div style="left:258px;top:479px;width:4px;height:2px;background:#a4a4a4"></div>
<div style="left:233px;top:487px;width:4px;height:2px;background:#a4a4a4"></div>
<div style="left:258px;top:487px;width:4px;height:2px;background:#a4a4a4"></div>
<div style="left:233px;top:495px;width:4px;height:2px;background:#a4a4a4"></div>
<div style="left:258px;top:495px;width:4px;height:2px;background:#a4a4a4"></div>
<div style="left:233px;top:503px;width:4px;height:2px;background:#a4a4a4"></div>
<div style="left:258px;top:503px;width:4px;height:2px;background:#a4a4a4"></div>
<div style="left:229px;top:511px;width:8px;height:3px;background:#d8d8d8"></div>
<div style="left:258px;top:511px;width:8px;height:3px;background:#d8d8d8"></div>
<div style="left:233px;top:519px;width:4px;height:2px;background:#a4a4a4"></div>
<div style="left:258px;top:519px;width:4px;height:2px;background:#a4a4a4"></div>
<div style="left:233px;top:527px;width:4px;height:2px;background:#a4a4a4"></div>
<div style="left:258px;top:527px;width:4px;height:2px;background:#a4a4a4"></div>
<div style="left:233px;top:535px;width:4px;height:2px;background:#a4a4a4"></div>
<div style="left:258px;top:535px;width:4px;height:2px;background:#a4a4a4"></div>
<div style="left:233px;top:543px;width:4px;height:2px;background:#a4a4a4"></div>
<div style="left:258px;top:543px;width:4px;height:2px;background:#a4a4a4"></div>
<div style="left:233px;top:551px;width:4px;height:2px;background:#a4a4a4"></div>
<div style="left:258px;top:551px;width:4px;height:2px;background:#a4a4a4"></div>
<div style="left:233px;top:559px;width:4px;height:2px;background:#a4a4a4"></div>
<div style="left:258px;top:559px;width:4px;height:2px;background:#a4a4a4"></div>
<div style="left:233px;top:567px;width:4px;height:2px;background:#a4a4a4"></div>
<div style="left:258px;top:567px;width:4px;height:2px;background:#a4a4a4"></div>
<div style="left:233px;top:575px;width:4px;height:2px;background:#a4a4a4"></div>
<div style="left:258px;top:575px;width:4px;height:2px;background:#a4a4a4"></div>
<div style="left:233px;top:583px;width:4px;height:2px;background:#a4a4a4"></div>
<div style="left:258px;top:583px;width:4px;height:2px;background:#a4a4a4"></div>
<div style="left:233px;top:591px;width:4px;height:2px;background:#a4a4a4"></div>
<div style="left:258px;top:591px;width:4px;height:2px;background:#a4a4a4"></div>
<div style="left:246px;top:427px;width:3px;height:170px;background:linear-gradient(90deg,#ffffff 0%,#f4f4f4 60%,#c0c0c0 100%)"></div>
<div style="left:238px;top:508px;width:18px;height:8px;background:linear-gradient(#f8f8f8,#d4d4d4);border:1px solid #fff;border-radius:1px;box-shadow:0 1px 1px rgba(0,0,0,.5)"></div>
<div style="left:219px;top:609px;width:57px;height:21px;background:#555555;border:1px solid #a8a8a8;box-shadow:inset 1px 1px 0 #3c3c3c"></div>
<div class="t" style="left:219px;top:609px;width:41px;height:21px;font:14px 'Liberation Sans';color:#f2f2f2;justify-content:flex-end;letter-spacing:1px">0.0</div>
<div style="left:260px;top:610px;width:15px;height:19px;background:linear-gradient(#f4f4f4,#dadada);border:1px solid #c0c0c0"></div>
<svg style="position:absolute;left:260px;top:610px" width="15" height="19"><path d="M4.5,8 L7.5,5 L10.5,8 Z" fill="#4864c0"/><path d="M4.5,12 L7.5,15 L10.5,12 Z" fill="#4864c0"/><line x1="1" y1="9.5" x2="14" y2="9.5" stroke="#c8c8c8"/></svg>
<div class="t" style="left:219px;top:632.6px;width:57px;height:14px;font:13.3px 'Liberation Sans';letter-spacing:2.3px;-webkit-text-stroke:0.35px;color:#f2f2f2">dB</div>
<div style="left:219px;top:649px;width:57px;height:26px;background:#6d6d6d;border:1px solid #f0f0f0;box-shadow:inset 1px 1px 0 #505050"></div>
<div class="t" style="left:218px;top:649px;width:57px;height:26px;font:14px 'Liberation Sans';-webkit-text-stroke:0.4px;color:#f2f2f2;letter-spacing:1px">Unity</div>
<div class="t" style="left:277.5px;top:401px;width:59px;height:14px;font:14px 'Liberation Sans';color:#f2f2f2;letter-spacing:2px;-webkit-text-stroke:0.1px">Ch. 4</div>
<div style="left:289px;top:419px;width:39px;height:185px;background:#686868"></div>
<div style="left:294px;top:431px;width:4px;height:2px;background:#a4a4a4"></div>
<div style="left:319px;top:431px;width:4px;height:2px;background:#a4a4a4"></div>
<div style="left:294px;top:439px;width:4px;height:2px;background:#a4a4a4"></div>
<div style="left:319px;top:439px;width:4px;height:2px;background:#a4a4a4"></div>
<div style="left:294px;top:447px;width:4px;height:2px;background:#a4a4a4"></div>
<div style="left:319px;top:447px;width:4px;height:2px;background:#a4a4a4"></div>
<div style="left:294px;top:455px;width:4px;height:2px;background:#a4a4a4"></div>
<div style="left:319px;top:455px;width:4px;height:2px;background:#a4a4a4"></div>
<div style="left:294px;top:463px;width:4px;height:2px;background:#a4a4a4"></div>
<div style="left:319px;top:463px;width:4px;height:2px;background:#a4a4a4"></div>
<div style="left:294px;top:471px;width:4px;height:2px;background:#a4a4a4"></div>
<div style="left:319px;top:471px;width:4px;height:2px;background:#a4a4a4"></div>
<div style="left:294px;top:479px;width:4px;height:2px;background:#a4a4a4"></div>
<div style="left:319px;top:479px;width:4px;height:2px;background:#a4a4a4"></div>
<div style="left:294px;top:487px;width:4px;height:2px;background:#a4a4a4"></div>
<div style="left:319px;top:487px;width:4px;height:2px;background:#a4a4a4"></div>
<div style="left:294px;top:495px;width:4px;height:2px;background:#a4a4a4"></div>
<div style="left:319px;top:495px;width:4px;height:2px;background:#a4a4a4"></div>
<div style="left:294px;top:503px;width:4px;height:2px;background:#a4a4a4"></div>
<div style="left:319px;top:503px;width:4px;height:2px;background:#a4a4a4"></div>
<div style="left:290px;top:511px;width:8px;height:3px;background:#d8d8d8"></div>
<div style="left:319px;top:511px;width:8px;height:3px;background:#d8d8d8"></div>
<div style="left:294px;top:519px;width:4px;height:2px;background:#a4a4a4"></div>
<div style="left:319px;top:519px;width:4px;height:2px;background:#a4a4a4"></div>
<div style="left:294px;top:527px;width:4px;height:2px;background:#a4a4a4"></div>
<div style="left:319px;top:527px;width:4px;height:2px;background:#a4a4a4"></div>
<div style="left:294px;top:535px;width:4px;height:2px;background:#a4a4a4"></div>
<div style="left:319px;top:535px;width:4px;height:2px;background:#a4a4a4"></div>
<div style="left:294px;top:543px;width:4px;height:2px;background:#a4a4a4"></div>
<div style="left:319px;top:543px;width:4px;height:2px;background:#a4a4a4"></div>
<div style="left:294px;top:551px;width:4px;height:2px;background:#a4a4a4"></div>
<div style="left:319px;top:551px;width:4px;height:2px;background:#a4a4a4"></div>
<div style="left:294px;top:559px;width:4px;height:2px;background:#a4a4a4"></div>
<div style="left:319px;top:559px;width:4px;height:2px;background:#a4a4a4"></div>
<div style="left:294px;top:567px;width:4px;height:2px;background:#a4a4a4"></div>
<div style="left:319px;top:567px;width:4px;height:2px;background:#a4a4a4"></div>
<div style="left:294px;top:575px;width:4px;height:2px;background:#a4a4a4"></div>
<div style="left:319px;top:575px;width:4px;height:2px;background:#a4a4a4"></div>
<div style="left:294px;top:583px;width:4px;height:2px;background:#a4a4a4"></div>
<div style="left:319px;top:583px;width:4px;height:2px;background:#a4a4a4"></div>
<div style="left:294px;top:591px;width:4px;height:2px;background:#a4a4a4"></div>
<div style="left:319px;top:591px;width:4px;height:2px;background:#a4a4a4"></div>
<div style="left:307px;top:427px;width:3px;height:170px;background:linear-gradient(90deg,#ffffff 0%,#f4f4f4 60%,#c0c0c0 100%)"></div>
<div style="left:299px;top:508px;width:18px;height:8px;background:linear-gradient(#f8f8f8,#d4d4d4);border:1px solid #fff;border-radius:1px;box-shadow:0 1px 1px rgba(0,0,0,.5)"></div>
<div style="left:279px;top:609px;width:57px;height:21px;background:#555555;border:1px solid #a8a8a8;box-shadow:inset 1px 1px 0 #3c3c3c"></div>
<div class="t" style="left:279px;top:609px;width:41px;height:21px;font:14px 'Liberation Sans';color:#f2f2f2;justify-content:flex-end;letter-spacing:1px">0.0</div>
<div style="left:320px;top:610px;width:15px;height:19px;background:linear-gradient(#f4f4f4,#dadada);border:1px solid #c0c0c0"></div>
<svg style="position:absolute;left:320px;top:610px" width="15" height="19"><path d="M4.5,8 L7.5,5 L10.5,8 Z" fill="#4864c0"/><path d="M4.5,12 L7.5,15 L10.5,12 Z" fill="#4864c0"/><line x1="1" y1="9.5" x2="14" y2="9.5" stroke="#c8c8c8"/></svg>
<div class="t" style="left:279px;top:632.6px;width:57px;height:14px;font:13.3px 'Liberation Sans';letter-spacing:2.3px;-webkit-text-stroke:0.35px;color:#f2f2f2">dB</div>
<div style="left:279px;top:649px;width:57px;height:26px;background:#6d6d6d;border:1px solid #f0f0f0;box-shadow:inset 1px 1px 0 #505050"></div>
<div class="t" style="left:278px;top:649px;width:57px;height:26px;font:14px 'Liberation Sans';-webkit-text-stroke:0.4px;color:#f2f2f2;letter-spacing:1px">Unity</div>
<div class="t" style="left:363.5px;top:401px;width:59px;height:14px;font:14px 'Liberation Sans';color:#f2f2f2;letter-spacing:1px;-webkit-text-stroke:0.1px">Master</div>
<div style="left:375px;top:419px;width:39px;height:185px;background:#686868"></div>
<div style="left:380px;top:431px;width:4px;height:2px;background:#a4a4a4"></div>
<div style="left:405px;top:431px;width:4px;height:2px;background:#a4a4a4"></div>
<div style="left:380px;top:439px;width:4px;height:2px;background:#a4a4a4"></div>
<div style="left:405px;top:439px;width:4px;height:2px;background:#a4a4a4"></div>
<div style="left:380px;top:447px;width:4px;height:2px;background:#a4a4a4"></div>
<div style="left:405px;top:447px;width:4px;height:2px;background:#a4a4a4"></div>
<div style="left:380px;top:455px;width:4px;height:2px;background:#a4a4a4"></div>
<div style="left:405px;top:455px;width:4px;height:2px;background:#a4a4a4"></div>
<div style="left:380px;top:463px;width:4px;height:2px;background:#a4a4a4"></div>
<div style="left:405px;top:463px;width:4px;height:2px;background:#a4a4a4"></div>
<div style="left:380px;top:471px;width:4px;height:2px;background:#a4a4a4"></div>
<div style="left:405px;top:471px;width:4px;height:2px;background:#a4a4a4"></div>
<div style="left:380px;top:479px;width:4px;height:2px;background:#a4a4a4"></div>
<div style="left:405px;top:479px;width:4px;height:2px;background:#a4a4a4"></div>
<div style="left:380px;top:487px;width:4px;height:2px;background:#a4a4a4"></div>
<div style="left:405px;top:487px;width:4px;height:2px;background:#a4a4a4"></div>
<div style="left:380px;top:495px;width:4px;height:2px;background:#a4a4a4"></div>
<div style="left:405px;top:495px;width:4px;height:2px;background:#a4a4a4"></div>
<div style="left:380px;top:503px;width:4px;height:2px;background:#a4a4a4"></div>
<div style="left:405px;top:503px;width:4px;height:2px;background:#a4a4a4"></div>
<div style="left:376px;top:511px;width:8px;height:3px;background:#d8d8d8"></div>
<div style="left:405px;top:511px;width:8px;height:3px;background:#d8d8d8"></div>
<div style="left:380px;top:519px;width:4px;height:2px;background:#a4a4a4"></div>
<div style="left:405px;top:519px;width:4px;height:2px;background:#a4a4a4"></div>
<div style="left:380px;top:527px;width:4px;height:2px;background:#a4a4a4"></div>
<div style="left:405px;top:527px;width:4px;height:2px;background:#a4a4a4"></div>
<div style="left:380px;top:535px;width:4px;height:2px;background:#a4a4a4"></div>
<div style="left:405px;top:535px;width:4px;height:2px;background:#a4a4a4"></div>
<div style="left:380px;top:543px;width:4px;height:2px;background:#a4a4a4"></div>
<div style="left:405px;top:543px;width:4px;height:2px;background:#a4a4a4"></div>
<div style="left:380px;top:551px;width:4px;height:2px;background:#a4a4a4"></div>
<div style="left:405px;top:551px;width:4px;height:2px;background:#a4a4a4"></div>
<div style="left:380px;top:559px;width:4px;height:2px;background:#a4a4a4"></div>
<div style="left:405px;top:559px;width:4px;height:2px;background:#a4a4a4"></div>
<div style="left:380px;top:567px;width:4px;height:2px;background:#a4a4a4"></div>
<div style="left:405px;top:567px;width:4px;height:2px;background:#a4a4a4"></div>
<div style="left:380px;top:575px;width:4px;height:2px;background:#a4a4a4"></div>
<div style="left:405px;top:575px;width:4px;height:2px;background:#a4a4a4"></div>
<div style="left:380px;top:583px;width:4px;height:2px;background:#a4a4a4"></div>
<div style="left:405px;top:583px;width:4px;height:2px;background:#a4a4a4"></div>
<div style="left:380px;top:591px;width:4px;height:2px;background:#a4a4a4"></div>
<div style="left:405px;top:591px;width:4px;height:2px;background:#a4a4a4"></div>
<div style="left:393px;top:427px;width:3px;height:170px;background:linear-gradient(90deg,#ffffff 0%,#f4f4f4 60%,#c0c0c0 100%)"></div>
<div style="left:385px;top:508px;width:18px;height:8px;background:linear-gradient(#f8f8f8,#d4d4d4);border:1px solid #fff;border-radius:1px;box-shadow:0 1px 1px rgba(0,0,0,.5)"></div>
<div style="left:366px;top:609px;width:57px;height:21px;background:#555555;border:1px solid #a8a8a8;box-shadow:inset 1px 1px 0 #3c3c3c"></div>
<div class="t" style="left:366px;top:609px;width:41px;height:21px;font:14px 'Liberation Sans';color:#f2f2f2;justify-content:flex-end;letter-spacing:1px">0.0</div>
<div style="left:407px;top:610px;width:15px;height:19px;background:linear-gradient(#f4f4f4,#dadada);border:1px solid #c0c0c0"></div>
<svg style="position:absolute;left:407px;top:610px" width="15" height="19"><path d="M4.5,8 L7.5,5 L10.5,8 Z" fill="#4864c0"/><path d="M4.5,12 L7.5,15 L10.5,12 Z" fill="#4864c0"/><line x1="1" y1="9.5" x2="14" y2="9.5" stroke="#c8c8c8"/></svg>
<div class="t" style="left:366px;top:632.6px;width:57px;height:14px;font:13.3px 'Liberation Sans';letter-spacing:2.3px;-webkit-text-stroke:0.35px;color:#f2f2f2">dB</div>
<div style="left:366px;top:649px;width:57px;height:26px;background:#6d6d6d;border:1px solid #f0f0f0;box-shadow:inset 1px 1px 0 #505050"></div>
<div class="t" style="left:365px;top:649px;width:57px;height:26px;font:14px 'Liberation Sans';-webkit-text-stroke:0.4px;color:#f2f2f2;letter-spacing:1px">Unity</div>
<div style="left:226px;top:687px;width:69px;height:21px;background:#6d6d6d;border:1px solid #f0f0f0;box-shadow:inset 1px 1px 0 #a8a8a8"></div>
<div class="t" style="left:226px;top:685.5px;width:69px;height:21px;font:bold 11px 'Liberation Sans';color:#f2f2f2;letter-spacing:0.5px">Close</div>
<div style="left:455px;top:386px;width:460px;height:272px;background:#000"></div>
<div style="left:456px;top:387px;width:458px;height:270px;background:#b8c6e0;border-left:2px solid #fff;border-top:1px solid #fff;border-right:2px solid #4cd2f2;border-bottom:2px solid #4cd2f2;border-radius:5px 5px 0 0"></div>
<div style="left:458px;top:388px;width:453px;height:27px;background:linear-gradient(#93adcb,#b3cbe6 90%,#c2daf4);border-radius:4px 4px 0 0"></div>
<div class="t" style="left:484px;top:392px;width:300px;height:20px;font:14px 'Liberation Sans';letter-spacing:0.4px;color:#101028;justify-content:flex-start;-webkit-text-stroke:0">Analog Audio Output</div>
<svg style="position:absolute;left:458px;top:390px;overflow:visible" width="24" height="22" viewBox="0 0 24 22"><path d="M7,3 L15,3 L17,5 L17,8.8 L18,9.6 L18,12.2 L19,13.2 L19,14.6 L20,16 L20,18 L2.7,18 L2.7,14.2 L14,14.2 L14,5 L8.8,5 L8.8,8.8 L12.1,8.8 L12.1,12.1 L5,12.1 L5,8.8 L6,8.8 L6,4 Z" fill="rgba(40,60,70,0.45)" transform="translate(0.8,0.8)"/><path d="M7,3 L15,3 L17,5 L17,8.8 L18,9.6 L18,12.2 L19,13.2 L19,14.6 L20,16 L20,18 L2.7,18 L2.7,14.2 L14,14.2 L14,5 L8.8,5 L8.8,8.8 L12.1,8.8 L12.1,12.1 L5,12.1 L5,8.8 L6,8.8 L6,4 Z" fill="#ff0000"/></svg>
<div style="left:798px;top:392px;width:34px;height:19px;border:1px solid #3d4f66;border-radius:3px;background:linear-gradient(#d6e4f4 0%,#c3d6ee 50%,#a9c2e0 51%,#bcd2ec 100%);box-shadow:inset 0 0 0 1px rgba(255,255,255,.5)"></div>
<div style="left:809px;top:401px;width:11px;height:5px;background:#f4f4f4;border:1px solid #3c4450;border-radius:2px"></div>
<div style="left:836px;top:392px;width:34px;height:19px;border:1px solid #8fa9c8;border-radius:3px;background:linear-gradient(#c6d8ee 0%,#b8cde8 50%,#a6bfdd 51%,#b4cae6 100%)"></div>
<div style="left:847px;top:396px;width:12px;height:10px;border:1px solid #3c4450;background:#e8e8e8;border-radius:1px"></div>
<div style="left:850px;top:399px;width:6px;height:4px;border:1px solid #3c4450;background:#6d8fc0"></div>
<div style="left:873px;top:392px;width:36px;height:19px;border:1px solid #4a1c24;border-radius:3px;background:linear-gradient(#eeb0a0 0%,#e2907c 48%,#c8452a 50%,#d0603e 80%,#e09078 100%);box-shadow:inset 0 0 0 1px rgba(255,220,210,.45)"></div>
<svg style="position:absolute;left:873px;top:392px" width="36" height="19" viewBox="0 0 36 19"><g transform="translate(18.0,9.8) scale(1.1612903225806452)"><path d="M-3.6,-2.4 L3.6,2.4 M3.6,-2.4 L-3.6,2.4" stroke="#3a3a48" stroke-width="4.4" stroke-linecap="round"/><path d="M-3.6,-2.4 L3.6,2.4 M3.6,-2.4 L-3.6,2.4" stroke="#fafafa" stroke-width="2.5" stroke-linecap="round"/></g></svg>
<div style="left:459px;top:415px;width:452px;height:239px;background:#585858"></div>
<div style="left:480px;top:429px;width:410px;height:23px;background:#6b6b6b"></div>
<div class="t" style="left:480px;top:428px;width:410px;height:23px;font:bold 13.5px 'Liberation Sans';color:#f2f2f2;letter-spacing:0.54px">Analog Audio Output Level</div>
<div class="t" style="left:472px;top:459px;width:50px;height:25px;font:bold 13.5px 'Liberation Sans';color:#f2f2f2;letter-spacing:0.95px">Ch. 1</div>
<div style="left:529px;top:459px;width:85px;height:25px;background:#6464e6;border:1px solid #f0f0f0;box-shadow:inset 1px 1px 0 #4646d8"></div>
<div class="t" style="left:529px;top:459px;width:85px;height:25px;font:bold 13.5px 'Liberation Sans';color:#f2f2f2;letter-spacing:0.75px">−10 dBu</div>
<div style="left:620px;top:459px;width:86px;height:25px;background:#6d6d6d;border:1px solid #f0f0f0;box-shadow:inset 1px 1px 0 #505050"></div>
<div class="t" style="left:620px;top:459px;width:86px;height:25px;font:bold 13.5px 'Liberation Sans';color:#f2f2f2;letter-spacing:0.75px">0 dBu</div>
<div style="left:712px;top:459px;width:86px;height:25px;background:#6d6d6d;border:1px solid #f0f0f0;box-shadow:inset 1px 1px 0 #505050"></div>
<div class="t" style="left:712px;top:459px;width:86px;height:25px;font:bold 13.5px 'Liberation Sans';color:#f2f2f2;letter-spacing:0.75px">+4 dBu</div>
<div style="left:804px;top:459px;width:86px;height:25px;background:#6d6d6d;border:1px solid #f0f0f0;box-shadow:inset 1px 1px 0 #505050"></div>
<div class="t" style="left:804px;top:459px;width:86px;height:25px;font:bold 13.5px 'Liberation Sans';color:#f2f2f2;letter-spacing:0.75px">+8 dBu</div>
<div class="t" style="left:472px;top:498px;width:50px;height:25px;font:bold 13.5px 'Liberation Sans';color:#f2f2f2;letter-spacing:0.95px">Ch. 2</div>
<div style="left:529px;top:498px;width:85px;height:25px;background:#6464e6;border:1px solid #f0f0f0;box-shadow:inset 1px 1px 0 #4646d8"></div>
<div class="t" style="left:529px;top:498px;width:85px;height:25px;font:bold 13.5px 'Liberation Sans';color:#f2f2f2;letter-spacing:0.75px">−10 dBu</div>
<div style="left:620px;top:498px;width:86px;height:25px;background:#6d6d6d;border:1px solid #f0f0f0;box-shadow:inset 1px 1px 0 #505050"></div>
<div class="t" style="left:620px;top:498px;width:86px;height:25px;font:bold 13.5px 'Liberation Sans';color:#f2f2f2;letter-spacing:0.75px">0 dBu</div>
<div style="left:712px;top:498px;width:86px;height:25px;background:#6d6d6d;border:1px solid #f0f0f0;box-shadow:inset 1px 1px 0 #505050"></div>
<div class="t" style="left:712px;top:498px;width:86px;height:25px;font:bold 13.5px 'Liberation Sans';color:#f2f2f2;letter-spacing:0.75px">+4 dBu</div>
<div style="left:804px;top:498px;width:86px;height:25px;background:#6d6d6d;border:1px solid #f0f0f0;box-shadow:inset 1px 1px 0 #505050"></div>
<div class="t" style="left:804px;top:498px;width:86px;height:25px;font:bold 13.5px 'Liberation Sans';color:#f2f2f2;letter-spacing:0.75px">+8 dBu</div>
<div class="t" style="left:472px;top:537px;width:50px;height:25px;font:bold 13.5px 'Liberation Sans';color:#f2f2f2;letter-spacing:0.95px">Ch. 3</div>
<div style="left:529px;top:537px;width:85px;height:25px;background:#6464e6;border:1px solid #f0f0f0;box-shadow:inset 1px 1px 0 #4646d8"></div>
<div class="t" style="left:529px;top:537px;width:85px;height:25px;font:bold 13.5px 'Liberation Sans';color:#f2f2f2;letter-spacing:0.75px">−10 dBu</div>
<div style="left:620px;top:537px;width:86px;height:25px;background:#6d6d6d;border:1px solid #f0f0f0;box-shadow:inset 1px 1px 0 #505050"></div>
<div class="t" style="left:620px;top:537px;width:86px;height:25px;font:bold 13.5px 'Liberation Sans';color:#f2f2f2;letter-spacing:0.75px">0 dBu</div>
<div style="left:712px;top:537px;width:86px;height:25px;background:#6d6d6d;border:1px solid #f0f0f0;box-shadow:inset 1px 1px 0 #505050"></div>
<div class="t" style="left:712px;top:537px;width:86px;height:25px;font:bold 13.5px 'Liberation Sans';color:#f2f2f2;letter-spacing:0.75px">+4 dBu</div>
<div style="left:804px;top:537px;width:86px;height:25px;background:#6d6d6d;border:1px solid #f0f0f0;box-shadow:inset 1px 1px 0 #505050"></div>
<div class="t" style="left:804px;top:537px;width:86px;height:25px;font:bold 13.5px 'Liberation Sans';color:#f2f2f2;letter-spacing:0.75px">+8 dBu</div>
<div class="t" style="left:472px;top:576px;width:50px;height:25px;font:bold 13.5px 'Liberation Sans';color:#f2f2f2;letter-spacing:0.95px">Ch. 4</div>
<div style="left:529px;top:576px;width:85px;height:25px;background:#6464e6;border:1px solid #f0f0f0;box-shadow:inset 1px 1px 0 #4646d8"></div>
<div class="t" style="left:529px;top:576px;width:85px;height:25px;font:bold 13.5px 'Liberation Sans';color:#f2f2f2;letter-spacing:0.75px">−10 dBu</div>
<div style="left:620px;top:576px;width:86px;height:25px;background:#6d6d6d;border:1px solid #f0f0f0;box-shadow:inset 1px 1px 0 #505050"></div>
<div class="t" style="left:620px;top:576px;width:86px;height:25px;font:bold 13.5px 'Liberation Sans';color:#f2f2f2;letter-spacing:0.75px">0 dBu</div>
<div style="left:712px;top:576px;width:86px;height:25px;background:#6d6d6d;border:1px solid #f0f0f0;box-shadow:inset 1px 1px 0 #505050"></div>
<div class="t" style="left:712px;top:576px;width:86px;height:25px;font:bold 13.5px 'Liberation Sans';color:#f2f2f2;letter-spacing:0.75px">+4 dBu</div>
<div style="left:804px;top:576px;width:86px;height:25px;background:#6d6d6d;border:1px solid #f0f0f0;box-shadow:inset 1px 1px 0 #505050"></div>
<div class="t" style="left:804px;top:576px;width:86px;height:25px;font:bold 13.5px 'Liberation Sans';color:#f2f2f2;letter-spacing:0.75px">+8 dBu</div>
<div style="left:642px;top:620px;width:87px;height:27px;background:#6d6d6d;border:2px solid #f0f0f0"></div>
<div class="t" style="left:642px;top:618.5px;width:87px;height:27px;font:bold 13.5px 'Liberation Sans';color:#f2f2f2;letter-spacing:0.78px">Close</div>
</body></html>
